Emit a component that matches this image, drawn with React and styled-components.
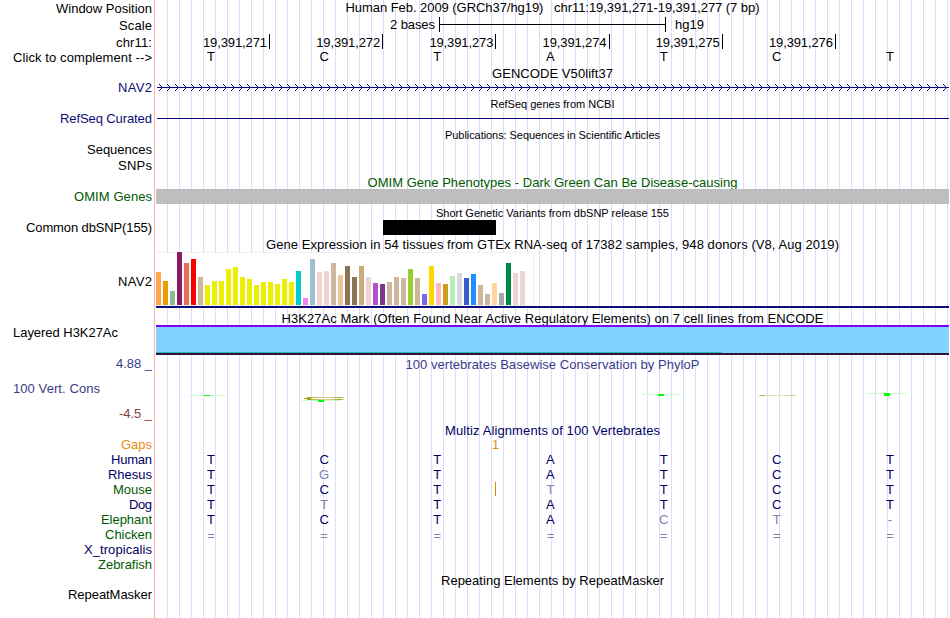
import React, { useLayoutEffect, useRef } from "react";
import styled, { createGlobalStyle } from "styled-components";

const GlobalStyle = createGlobalStyle`
  body {
    margin: 0;
    background: #fff;
    overflow: hidden;
  }
`;

const Browser = styled.div`
  width: 949px;
  height: 618px;
  overflow: hidden;
  font-family: "Liberation Sans", Arial, sans-serif;
  font-size: 13px;
  line-height: 15px;
  color: #000;
  background: linear-gradient(#ffb4b4, #ffb4b4) 154px 0 / 1px 100% no-repeat,
    repeating-linear-gradient(
        to right,
        #dcdcff 0,
        #dcdcff 1px,
        transparent 1px,
        transparent 12px
      )
      167px 0 / 782px 100% no-repeat;
`;

const Track = styled.section`
  display: flex;
  height: ${(p) => p.$height}px;
`;

const Labels = styled.div`
  display: flex;
  flex-direction: column;
  align-items: flex-end;
  flex: none;
  box-sizing: border-box;
  width: 155px;
  padding: ${(p) => p.$top || 0}px 3px 0 13px;
`;

const Data = styled.div`
  display: flex;
  flex-direction: column;
  flex: 1;
  min-width: 0;
`;

const Label = styled.div`
  height: 15px;
  margin-top: ${(p) => p.$gap || 0}px;
  align-self: ${(p) => (p.$left ? "flex-start" : "flex-end")};
  color: ${(p) => p.$color || "#000"};
  white-space: nowrap;
`;

const Title = styled.div`
  display: flex;
  justify-content: center;
  height: 15px;
  margin-top: ${(p) => p.$top || 0}px;
  padding-left: 1px;
  font-size: ${(p) => (p.$small ? 11 : 13)}px;
  color: ${(p) => p.$color || "#000"};
  white-space: pre;
`;

const ScaleBar = styled.div`
  display: flex;
  height: 15px;
  margin-top: 2px;
  padding-left: 235px;
  white-space: nowrap;
`;

const ScaleLine = styled.div`
  box-sizing: border-box;
  width: 227px;
  height: 15px;
  margin: 0 9px 0 4px;
  border: solid #000;
  border-width: 0 1px;
  background: linear-gradient(#000, #000) 0 7px / 100% 1px no-repeat;
`;

const Positions = styled.div`
  display: grid;
  grid-template-columns: repeat(6, 113.2px);
  margin: 2px 0 0 1.8px;
`;

const Position = styled.div`
  box-sizing: border-box;
  height: 15px;
  padding: 1px 2px 0 0;
  border-right: 1px solid #000;
  text-align: right;
`;

const Bases = styled.div`
  display: grid;
  grid-template-columns: repeat(7, 113.17px);
  height: 15px;
  margin-left: -0.6px;
  text-align: center;
`;

const Base = styled.span`
  color: ${(p) => p.$color};
`;

const ArrowLine = styled.svg`
  display: block;
  margin-top: 3px;
`;

const GeneLine = styled.div`
  height: 1px;
  margin: 6px 0 0 2px;
  background: #0c0c78;
`;

const OmimBar = styled.div`
  height: 15px;
  margin: -1px 0 0 1px;
  background: #bebebe;
`;

const SnpBar = styled.div`
  width: 113px;
  height: 15px;
  margin: -1px 0 0 228px;
  background: #000;
`;

const Expression = styled.div`
  display: flex;
  align-items: flex-end;
  gap: 2px;
  box-sizing: border-box;
  width: 378px;
  height: 54px;
  margin-left: 1px;
  background: #fff;
  border: solid #f0f0f0;
  border-width: 1px 1px 1px 0;
`;

const Tissue = styled.div`
  flex: none;
  width: 5px;
  height: ${(p) => p.$height}px;
  background: ${(p) => p.$color};
`;

const ExpressionModel = styled.div`
  height: 2px;
  margin-left: 1px;
  background: #0c0c78;
`;

const Histone = styled.div`
  box-sizing: border-box;
  height: 30px;
  margin: -1px 0 0 1px;
  border: solid #8000ff;
  border-width: 2px 0;
  border-bottom-color: #321432;
  background: linear-gradient(#32b4c8, #32b4c8) 0 25px / 566px 1px no-repeat,
    #80d2ff;
`;

const ConservationPlot = styled.svg`
  display: block;
  margin-top: 8px;
`;

const Gap = styled.div`
  width: 15px;
  height: 15px;
  margin: -1px 0 0 333px;
  color: #e68c14;
  text-align: center;
`;

const Species = styled.div`
  position: relative;
  height: 15px;
  padding-top: ${(p) => p.$top || 0}px;
`;

const Insert = styled.span`
  position: absolute;
  top: 0;
  left: 340px;
  width: 1px;
  height: 14px;
  background: #dc8c00;
`;

const NAVY = "#000064";
const GREEN = "#005a00";
const FADED = "#8080b1";

const tissues = [
  [33, "#ffa54f"], [24, "#ee9a00"], [14, "#8fbc8f"], [53, "#8b1c62"],
  [42, "#ee6a50"], [46, "#ff0000"], [28, "#cdb79e"], [20, "#eeee00"],
  [24, "#eeee00"], [24, "#eeee00"], [36, "#eeee00"], [38, "#eeee00"],
  [28, "#eeee00"], [26, "#eeee00"], [20, "#eeee00"], [23, "#eeee00"],
  [23, "#eeee00"], [21, "#eeee00"], [26, "#eeee00"], [23, "#eeee00"],
  [34, "#00cdcd"], [7, "#ee82ee"], [46, "#9ac0cd"], [33, "#eed5d2"],
  [34, "#eed5d2"], [42, "#cdb79e"], [30, "#eec591"], [39, "#8b7355"],
  [28, "#8b7355"], [39, "#cdaa7d"], [28, "#eed5d2"], [22, "#b452cd"],
  [21, "#7a378b"], [23, "#cdb79e"], [28, "#cdb79e"], [27, "#cdb79e"],
  [36, "#9acd32"], [27, "#cdb79e"], [11, "#7a67ee"], [39, "#ffd700"],
  [22, "#ffb6c1"], [21, "#cd9b1d"], [29, "#b4eeb4"], [32, "#d9d9d9"],
  [27, "#3a5fcd"], [31, "#1e90ff"], [20, "#cdb79e"], [11, "#cdb79e"],
  [22, "#ffd39b"], [12, "#a6a6a6"], [42, "#008b45"], [32, "#eed5d2"],
  [34, "#eed5d2"],
];

// lower case marks a base that differs from the human one
const species = [
  { name: "Human", width: 41, color: NAVY, bases: "TCTATCT" },
  { name: "Rhesus", width: 44, color: NAVY, bases: "TgTATCT" },
  { name: "Mouse", width: 39, color: GREEN, bases: "TCTtTCT", insert: true },
  { name: "Dog", width: 23, color: NAVY, bases: "TtTATCT" },
  { name: "Elephant", width: 51, color: GREEN, bases: "TCTAct-" },
  { name: "Chicken", width: 47, color: GREEN, bases: "=======", top: 1 },
  { name: "X_tropicalis", width: 68, color: NAVY, bases: "" },
  { name: "Zebrafish", width: 54, color: GREEN, bases: "" },
];

const positions = [271, 272, 273, 274, 275, 276];

// spreads the letters so that the text takes exactly the given width
const FitText = ({ width, children }) => {
  const ref = useRef(null);

  useLayoutEffect(() => {
    const el = ref.current;
    el.style.letterSpacing = "0px";
    const natural = el.getBoundingClientRect().width;
    const spacing = (width - natural) / (children.length - 1);
    el.style.letterSpacing = `${spacing}px`;
    el.style.marginRight = `${-spacing}px`;
  }, [width, children]);

  return <span ref={ref}>{children}</span>;
};

const Arrows = () => (
  <ArrowLine width="794" height="7" shapeRendering="crispEdges">
    <defs>
      <pattern id="chevron" x="4" width="8" height="7" patternUnits="userSpaceOnUse">
        {[0, 1, 2, 3, 2, 1, 0].map((x, y) => (
          <rect key={y} x={x} y={y} width="1" height="1" fill="#0c0c78" />
        ))}
      </pattern>
    </defs>
    <rect x="4" width="790" height="7" fill="url(#chevron)" />
    <rect x="2" y="3" width="792" height="1" fill="#0c0c78" />
  </ArrowLine>
);

const Conservation = () => (
  <ConservationPlot width="794" height="30" viewBox="155 380 794 30">
    <defs>
      <linearGradient id="olive">
        <stop offset="0" stopColor="#a0a000" />
        <stop offset="0.3" stopColor="#c8c878" />
        <stop offset="0.6" stopColor="#d7d796" />
        <stop offset="0.9" stopColor="#a0a014" />
        <stop offset="1" stopColor="#e6e6b4" />
      </linearGradient>
    </defs>
    <g fill="#c8ffc8">
      <rect x="188" y="395" width="38" height="1" />
      <rect x="302" y="400" width="38" height="1" />
      <rect x="642" y="394" width="38" height="1" />
      <rect x="868" y="393" width="38" height="1" />
    </g>
    <g fill="#00ff00">
      <rect x="204" y="395" width="6" height="1" />
      <rect x="318" y="400" width="6" height="2" />
      <rect x="658" y="394" width="6" height="2" />
      <rect x="884" y="393" width="6" height="3" />
    </g>
    <rect x="307" y="397" width="37" height="1" fill="url(#olive)" />
    <rect x="304" y="398" width="7" height="1" fill="#a0a000" />
    <rect x="307" y="399" width="37" height="1" fill="url(#olive)" />
    <rect x="758" y="395" width="38" height="1" fill="#e1e1b4" />
    <rect x="760" y="395" width="5" height="1" fill="#b4b450" />
    <rect x="789" y="395" width="5" height="1" fill="#cdcd82" />
  </ConservationPlot>
);

const BaseRow = ({ bases, plain }) => (
  <Bases>
    {bases.split("").map((base, i) => (
      <Base key={i} $color={plain ? "#000" : /[A-Z]/.test(base) ? NAVY : FADED}>
        {base.toUpperCase()}
      </Base>
    ))}
  </Bases>
);

const App = () => {
  return (
    <Browser>
      <GlobalStyle />

      <Track $height={66}>
        <Labels $top={1}>
          <Label><FitText width={96}>Window Position</FitText></Label>
          <Label $gap={2}><FitText width={33}>Scale</FitText></Label>
          <Label $gap={2}><FitText width={36}>chr11:</FitText></Label>
          <Label><FitText width={139}>{"Click to complement -->"}</FitText></Label>
        </Labels>
        <Data>
          <Title>
            <FitText width={414}>
              {"Human Feb. 2009 (GRCh37/hg19)   chr11:19,391,271-19,391,277 (7 bp)"}
            </FitText>
          </Title>
          <ScaleBar>
            <FitText width={45}>2 bases</FitText>
            <ScaleLine />
            <FitText width={29}>hg19</FitText>
          </ScaleBar>
          <Positions>
            {positions.map((n) => (
              <Position key={n}>
                <FitText width={64}>{`19,391,${n}`}</FitText>
              </Position>
            ))}
          </Positions>
          <BaseRow bases="TCTATCT" plain />
        </Data>
      </Track>

      <Track $height={31}>
        <Labels $top={14}>
          <Label $color="#0c0c78"><FitText width={34}>NAV2</FitText></Label>
        </Labels>
        <Data>
          <Title><FitText width={121}>GENCODE V50lift37</FitText></Title>
          <Arrows />
        </Data>
      </Track>

      <Track $height={31}>
        <Labels $top={14}>
          <Label $color="#0c0c78"><FitText width={92}>RefSeq Curated</FitText></Label>
        </Labels>
        <Data>
          <Title $small><FitText width={124}>RefSeq genes from NCBI</FitText></Title>
          <GeneLine />
        </Data>
      </Track>

      <Track $height={47}>
        <Labels $top={14}>
          <Label><FitText width={65}>Sequences</FitText></Label>
          <Label $gap={1}><FitText width={34}>SNPs</FitText></Label>
        </Labels>
        <Data>
          <Title $small>
            <FitText width={215}>Publications: Sequences in Scientific Articles</FitText>
          </Title>
        </Data>
      </Track>

      <Track $height={31}>
        <Labels $top={14}>
          <Label $color={GREEN}><FitText width={78}>OMIM Genes</FitText></Label>
        </Labels>
        <Data>
          <Title $color={GREEN}>
            <FitText width={370}>
              OMIM Gene Phenotypes - Dark Green Can Be Disease-causing
            </FitText>
          </Title>
          <OmimBar />
        </Data>
      </Track>

      <Track $height={31}>
        <Labels $top={14}>
          <Label><FitText width={126}>Common dbSNP(155)</FitText></Label>
        </Labels>
        <Data>
          <Title $small>
            <FitText width={233}>Short Genetic Variants from dbSNP release 155</FitText>
          </Title>
          <SnpBar />
        </Data>
      </Track>

      <Track $height={74}>
        <Labels $top={37}>
          <Label><FitText width={34}>NAV2</FitText></Label>
        </Labels>
        <Data>
          <Title>
            <FitText width={573}>
              Gene Expression in 54 tissues from GTEx RNA-seq of 17382 samples, 948 donors (V8, Aug 2019)
            </FitText>
          </Title>
          <Expression>
            {tissues.map(([height, color], i) => (
              <Tissue key={i} $height={height} $color={color} />
            ))}
          </Expression>
          <ExpressionModel />
        </Data>
      </Track>

      <Track $height={45}>
        <Labels $top={14}>
          <Label $left><FitText width={105}>Layered H3K27Ac</FitText></Label>
        </Labels>
        <Data>
          <Title>
            <FitText width={542}>
              H3K27Ac Mark (Often Found Near Active Regulatory Elements) on 7 cell lines from ENCODE
            </FitText>
          </Title>
          <Histone />
        </Data>
      </Track>

      <Track $height={67}>
        <Labels>
          <Label $color="#3c3c8c"><FitText width={36}>4.88 _</FitText></Label>
          <Label $left $gap={10} $color="#3c3c8c">
            <FitText width={87}>100 Vert. Cons</FitText>
          </Label>
          <Label $gap={10} $color="#8c3c3c"><FitText width={33}>-4.5 _</FitText></Label>
        </Labels>
        <Data>
          <Title $top={1} $color="#3c3c8c">
            <FitText width={294}>100 vertebrates Basewise Conservation by PhyloP</FitText>
          </Title>
          <Conservation />
        </Data>
      </Track>

      <Track $height={150}>
        <Labels $top={14}>
          <Label $color="#e68c14"><FitText width={31}>Gaps</FitText></Label>
          {species.map((s) => (
            <Label key={s.name} $color={s.color}>
              <FitText width={s.width}>{s.name}</FitText>
            </Label>
          ))}
        </Labels>
        <Data>
          <Title $color={NAVY}>
            <FitText width={215}>Multiz Alignments of 100 Vertebrates</FitText>
          </Title>
          <Gap>1</Gap>
          {species.map((s) => (
            <Species key={s.name} $top={s.top}>
              <BaseRow bases={s.bases} />
              {s.insert && <Insert />}
            </Species>
          ))}
        </Data>
      </Track>

      <Track $height={45}>
        <Labels $top={14}>
          <Label><FitText width={84}>RepeatMasker</FitText></Label>
        </Labels>
        <Data>
          <Title>
            <FitText width={223}>Repeating Elements by RepeatMasker</FitText>
          </Title>
        </Data>
      </Track>
    </Browser>
  );
};

export default App;
